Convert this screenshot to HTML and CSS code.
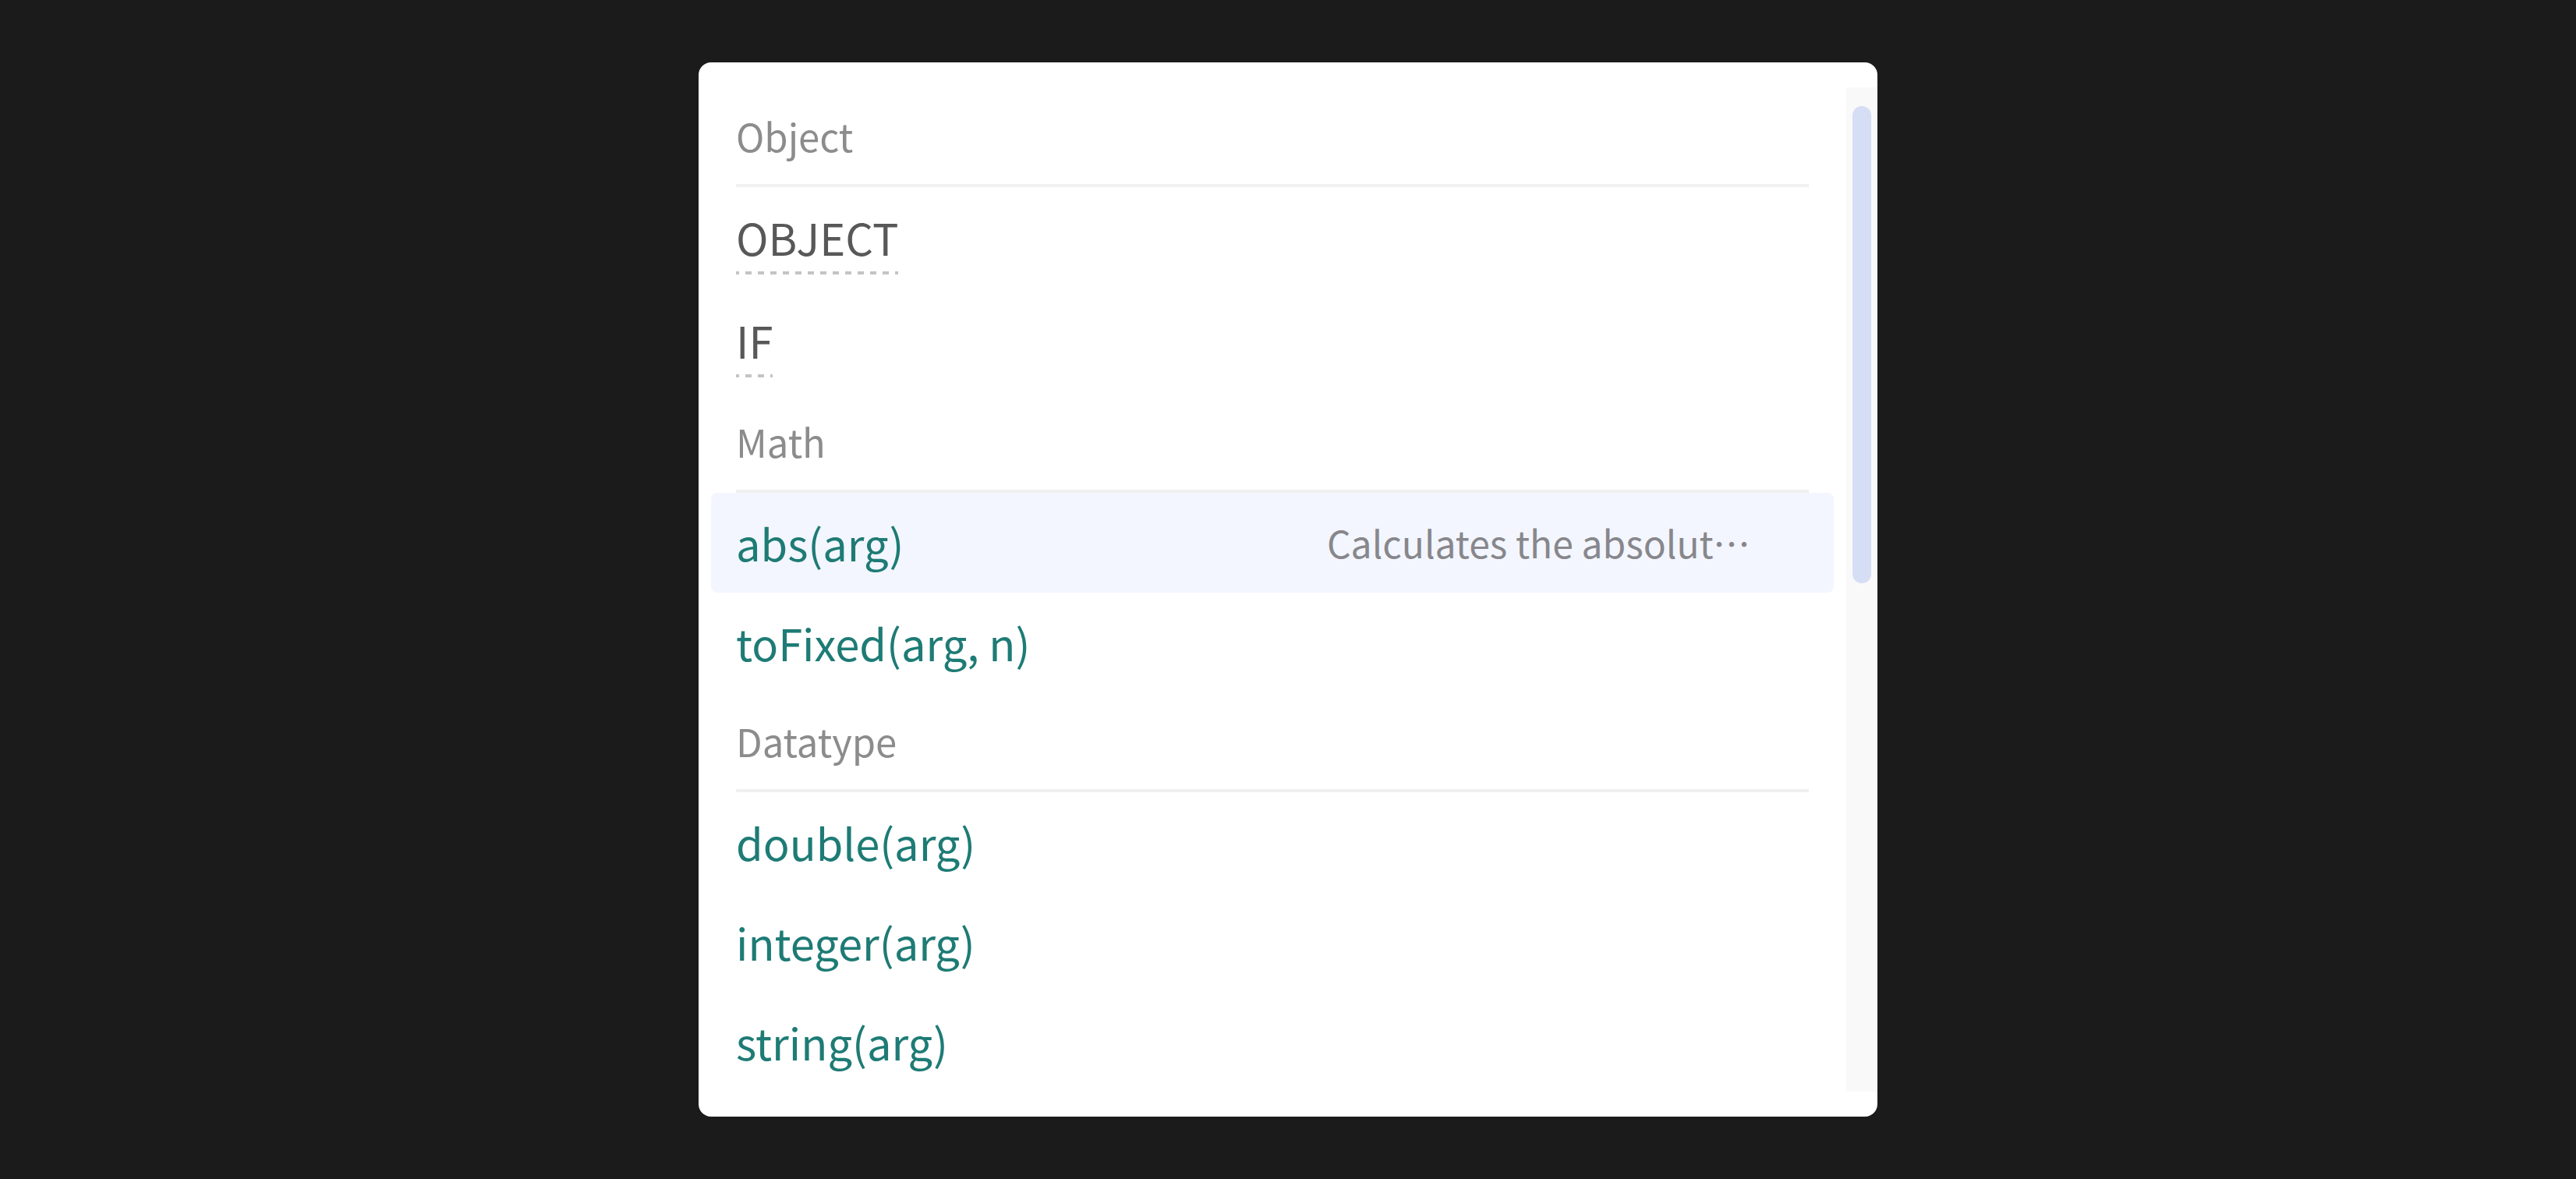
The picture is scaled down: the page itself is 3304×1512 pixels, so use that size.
FILE: index.html
```html
<!DOCTYPE html>
<html lang="zh-CN">
<head>
<meta charset="utf-8">
<title>Suggestions</title>
<link rel="stylesheet" href="styles.css">
</head>
<body>
<div class="panel">
  <div class="list">
    <div class="group-title">Object</div>
    <div class="item kw"><span class="name"><span class="dashed">OBJECT</span></span></div>
    <div class="item kw"><span class="name"><span class="dashed">IF</span></span></div>
    <div class="group-title">Math</div>
    <div class="item fn active"><span class="name">abs(arg)</span><span class="desc">Calculates the absolute value of the argument</span></div>
    <div class="item fn"><span class="name">toFixed(arg, n)</span></div>
    <div class="group-title">Datatype</div>
    <div class="item fn"><span class="name">double(arg)</span></div>
    <div class="item fn"><span class="name">integer(arg)</span></div>
    <div class="item fn"><span class="name">string(arg)</span></div>
  </div>
  <div class="scrollbar"><div class="thumb"></div></div>
</div>
</body>
</html>
```

FILE: styles.css
```css
html, body {
  margin: 0;
  padding: 0;
  background: #1b1b1b;
}
body {
  min-height: 100vh;
  display: flex;
  align-items: center;
  justify-content: center;
  font-family: "Noto Sans CJK SC", "Noto Sans", sans-serif;
}
.panel {
  width: 1512px;
  box-sizing: border-box;
  background: #ffffff;
  border-radius: 16px;
  padding: 32px 0 32px 16px;
  display: flex;
}
.list {
  flex: 1;
  margin-right: 16px;
  display: flex;
  flex-direction: column;
}
.group-title {
  margin: 0 32px;
  font-size: 49px;
  line-height: 124px;
  color: #8c8c8c;
  border-bottom: 4px solid #f0f0f0;
  white-space: nowrap;
}
.item {
  display: flex;
  padding: 0 32px;
  border-radius: 8px;
  white-space: nowrap;
}
.item.active {
  background: #f3f6fe;
}
.item .name {
  flex: 1;
  font-size: 56px;
  line-height: 128px;
}
.item.fn .name {
  color: #1e7b75;
}
.item.kw .name {
  color: #585858;
  line-height: normal;
  padding: 20px 0 20px;
}
.dashed {
  display: inline-block;
  line-height: 88px;
  padding-bottom: 4px;
  background-image: linear-gradient(90deg, #c4c4c4 50%, transparent 50%);
  background-size: 16px 4px;
  background-position: -4px 100%;
  background-repeat: repeat-x;
}
.desc {
  width: 556px;
  margin-right: 62px;
  font-size: 48px;
  line-height: 127px;
  padding-bottom: 1px;
  color: #87878c;
  overflow: hidden;
  text-overflow: ellipsis;
}
.scrollbar {
  width: 40px;
  background: #f9f9f9;
  padding: 24px 8px 0;
  box-sizing: border-box;
}
.thumb {
  height: 612px;
  background: #d6def6;
  border-radius: 12px;
}
```
